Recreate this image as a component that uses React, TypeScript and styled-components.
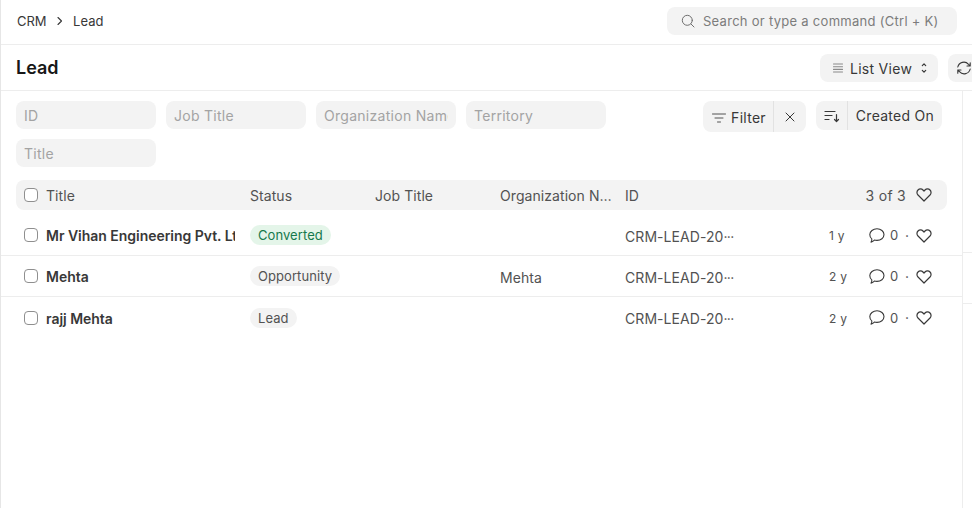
import React from "react";
import styled, { createGlobalStyle } from "styled-components";

const Global = createGlobalStyle`
  html, body { margin: 0; padding: 0; background: #fff; overflow: hidden; }
  body { font-family: Inter, "Noto Sans", sans-serif; font-size: 14px; color: #383838; letter-spacing: 0.02em; }
  * { box-sizing: border-box; }
`;

const Page = styled.div`
  width: 972px; height: 508px; overflow: hidden; border-left: 1px solid #e6e6e6;
  display: flex; flex-direction: column;
`;
const Navbar = styled.header`
  height: 45px; flex: none; border-bottom: 1px solid #ededed;
  display: flex; align-items: flex-start; justify-content: space-between; padding: 7px 15px 0 16px;
`;
const Crumbs = styled.nav`
  display: flex; align-items: center; gap: 10px; height: 27px; font-size: 13px; letter-spacing: 0; color: #383838;
`;
const Search = styled.div`
  width: 290px; height: 28px; border-radius: 8px; background: #f3f3f3; white-space: nowrap;
  display: flex; align-items: center; gap: 8px; padding-left: 14px; color: #7c7c7c; font-size: 13px;
`;
const Header = styled.div`
  height: 46px; flex: none; border-bottom: 1px solid #ededed;
  display: flex; align-items: flex-start; justify-content: space-between; padding: 9px 0 0 15px;
`;
const PageTitle = styled.h1`
  margin: 0; font-size: 18px; font-weight: 600; line-height: 28px; color: #171717; letter-spacing: 0;
`;
const HeaderActions = styled.div`
  display: flex; gap: 10px; margin-right: -8px;
`;
const ListViewBtn = styled.div`
  width: 118px; height: 28px; background: #f3f3f3; border-radius: 8px;
  display: flex; align-items: center; padding-left: 13px; gap: 7px; color: #383838;
`;
const IconBtn = styled.div`
  width: 32px; height: 28px; background: #f3f3f3; border-radius: 8px; display: flex; align-items: center; justify-content: center;
`;
const Body = styled.div`
  flex: 1; display: flex; min-height: 0;
`;
const Content = styled.main`
  width: 962px; flex: none; border-right: 1px solid #ededed;
`;
const Side = styled.aside`
  flex: 1; display: flex; flex-direction: column; padding-top: 111px;
`;
const SideLine = styled.div`
  height: 51px; border-bottom: 1px solid #ededed; flex: none;
`;
const FilterSection = styled.div`
  display: flex; justify-content: space-between; padding: 10px 20px 0 15px; height: 89px;
`;
const Inputs = styled.div`
  width: 600px; display: flex; flex-wrap: wrap; gap: 10px; align-content: flex-start;
`;
const Field = styled.div`
  width: 140px; height: 28px; background: #f3f3f3; border-radius: 8px; padding: 0 8px;
  line-height: 29px; color: #a3a3a3; font-size: 14px;
`;
const FieldText = styled.div`
  overflow: hidden; white-space: nowrap;
`;
const FilterActions = styled.div`
  display: flex; gap: 10px; align-items: flex-start;
`;
const Seg = styled.div<{ $h: number }>`
  display: flex; height: ${p => p.$h}px; background: #f3f3f3; border-radius: 8px; color: #383838;
`;
const SegPart = styled.div<{ $w: number; $divided?: boolean; $top?: number; $pl?: number }>`
  width: ${p => p.$w}px; display: flex; align-items: center; justify-content: center; gap: 5px;
  padding-top: ${p => p.$top ?? 0}px; padding-left: ${p => p.$pl ?? 0}px;
  border-right: ${p => (p.$divided ? "1px solid #e2e2e2" : "none")};
`;
const TableHead = styled.div`
  margin: 0 15px 0 15px; height: 30px; background: #f3f3f3; border-radius: 8px; letter-spacing: 0.005em;
  display: flex; align-items: center; padding-left: 8px; color: #525252;
`;
const Row = styled.div<{ $first?: boolean }>`
  height: ${p => (p.$first ? 46 : 41)}px; padding: ${p => (p.$first ? "5px" : "0")} 15px 0 23px; letter-spacing: 0.005em;
  display: flex; align-items: center; border-bottom: 1px solid #ededed;
  &:last-child { border-bottom: 0; }
`;
const Check = styled.span`
  width: 14px; height: 14px; flex: none; border: 1px solid #8f8f8f; border-radius: 4px; background: #fff; margin-right: 8px;
`;
const TitleCol = styled.div<{ $bold?: boolean }>`
  width: 189px; margin-right: 15px; overflow: hidden; white-space: nowrap; flex: none;
  font-weight: ${p => (p.$bold ? 600 : 400)}; color: ${p => (p.$bold ? "#383838" : "inherit")};
  padding-top: ${p => (p.$bold ? "1px" : "0")};
  letter-spacing: ${p => (p.$bold ? "-0.002em" : "inherit")};
`;
const Col = styled.div<{ $w: number; $gap?: number; $top?: number }>`
  width: ${p => p.$w}px; flex: none; overflow: hidden; white-space: nowrap; text-overflow: ellipsis;
  margin-right: ${p => p.$gap ?? 15}px; color: #525252; padding-top: ${p => p.$top ?? 0}px;
`;
const Dots = styled.span`
  letter-spacing: -0.05em;
`;
const Pill = styled.span<{ $green?: boolean }>`
  display: inline-flex; align-items: center; height: 20px; padding: 0 8px; border-radius: 10px; font-size: 13px;
  background: ${p => (p.$green ? "#e4f5e9" : "#f3f3f3")}; color: ${p => (p.$green ? "#16794c" : "#525252")};
`;
const HeadMeta = styled.div`
  margin-left: auto; margin-right: 15px; display: flex; align-items: center; gap: 10px; color: #525252; letter-spacing: 0.02em;
`;
const RowMeta = styled.div`
  margin-left: auto; display: flex; align-items: center; color: #383838; margin-right: 15px; letter-spacing: 0.02em;
`;
const Age = styled.span<{ $w: number }>`
  font-size: 12px; color: #525252; width: ${p => p.$w}px; padding-top: 1px;
`;
const Count = styled.span`
  margin: 0 0 0 5px; width: 15px; color: #525252; font-size: 13px;
`;
const Dot = styled.span`
  width: 11px; color: #525252;
`;

const stroke = { fill: "none", stroke: "currentColor", strokeLinecap: "round" as const, strokeLinejoin: "round" as const };

const Heart = ({ top = 0 }: { top?: number }) => (
  <svg width="16" height="16" viewBox="0 0 16 16" {...stroke} color="#383838" strokeWidth="1.2" style={top ? { marginTop: top } : undefined}>
    <path d="M8 14 2 8a3.500 3.500 0 0 1 0-5 3.500 3.500 0 0 1 5 0l1 1 1-1a3.500 3.500 0 0 1 5 0 3.500 3.500 0 0 1 0 5L8 14Z" />
  </svg>
);
const Comment = () => (
  <svg width="16" height="16" viewBox="0 0 16 16" {...stroke} color="#383838" strokeWidth="1.1" style={{ marginTop: 1 }}>
    <path d="M8 .8c3.900 0 7 2.500 7 5.800s-3.100 5.800-7 5.800c-.9 0-1.800-.1-2.600-.4-.8 1-2 1.800-3.400 2.100.7-.9 1-2 .8-3.200C1.400 10 .8 8.400 .8 6.600 .8 3.300 4.100 .8 8 .8Z" />
  </svg>
);

function LeadRow({ first, title, status, green, org, age }: { first?: boolean; title: string; status: string; green?: boolean; org?: string; age: string }) {
  return (
    <Row $first={first}>
      <Check />
      <TitleCol $bold>{title}</TitleCol>
      <Col $w={110}><Pill $green={green}>{status}</Pill></Col>
      <Col $w={110} />
      <Col $w={110} $top={2}>{org}</Col>
      <Col $w={112} $top={2}>CRM-LEAD-20<Dots>···</Dots></Col>
      <RowMeta>
        <Age $w={40}>{age}</Age>
        <Comment />
        <Count>0</Count>
        <Dot>·</Dot>
        <Heart top={1} />
      </RowMeta>
    </Row>
  );
}

export default function App() {
  return (
    <>
      <Global />
      <Page>
        <Navbar>
          <Crumbs>
            <span>CRM</span>
            <svg width="6.500" height="10" viewBox="0 0 6.500 10" {...stroke} color="#383838" strokeWidth="1.1"><path d="M1 1.500 4.500 5 1 8.500" /></svg>
            <span>Lead</span>
          </Crumbs>
          <Search>
            <svg width="14" height="14" viewBox="0 0 14 14" {...stroke} color="#6f6f6f" strokeWidth="1"><circle cx="6.300" cy="6.300" r="5" /><path d="m10 10 3 3" /></svg>
            <span>Search or type a command (Ctrl + K)</span>
          </Search>
        </Navbar>
        <Header>
          <PageTitle>Lead</PageTitle>
          <HeaderActions>
            <ListViewBtn>
              <svg width="10" height="10" viewBox="0 0 10 10" {...stroke} color="#8a8a8a" strokeWidth="1.100"><path d="M.5 1h9M.5 3.700h9M.5 6.400h9M.5 9h9" /></svg>
              <span>List View</span>
              <svg width="8" height="12" viewBox="0 0 8 12" {...stroke} color="#383838" strokeWidth="1.200" style={{ marginLeft: 1 }}><path d="M2.300 3.600 4 1.800l1.700 1.800M2.300 8.400 4 10.200l1.700-1.800" /></svg>
            </ListViewBtn>
            <IconBtn>
              <svg width="16" height="16" viewBox="0 0 16 16" {...stroke} color="#383838" strokeWidth="1.1"><path d="M1.800 7A6.200 6.200 0 0 1 12.500 4.300L14.200 6M14.200 9A6.200 6.200 0 0 1 3.500 11.700L1.800 10M14.200 2.800V6H11M1.800 13.200V10H5" /></svg>
            </IconBtn>
          </HeaderActions>
        </Header>
        <Body>
          <Content>
            <FilterSection>
              <Inputs>
                <Field><FieldText>ID</FieldText></Field>
                <Field><FieldText>Job Title</FieldText></Field>
                <Field><FieldText>Organization Name</FieldText></Field>
                <Field><FieldText>Territory</FieldText></Field>
                <Field><FieldText>Title</FieldText></Field>
              </Inputs>
              <FilterActions>
                <Seg $h={31}>
                  <SegPart $w={71} $divided $top={2} $pl={2}>
                    <svg width="14" height="10" viewBox="0 0 14 10" {...stroke} color="#525252" strokeWidth="1"><path d="M.5 1h13M3 5h8M5.500 9h3" /></svg>
                    <span>Filter</span>
                  </SegPart>
                  <SegPart $w={32}>
                    <svg width="10" height="10" viewBox="0 0 10 10" {...stroke} color="#383838" strokeWidth="1"><path d="m1 1 8 8M9 1 1 9" /></svg>
                  </SegPart>
                </Seg>
                <Seg $h={29}>
                  <SegPart $w={32} $divided>
                    <svg width="16" height="14" viewBox="0 0 16 14" {...stroke} color="#383838" strokeWidth="1.200"><path d="M1 2.500h10M1 6.500h7M1 10.500h4M12.500 5.500v7M10.500 10.500l2 2 2-2" /></svg>
                  </SegPart>
                  <SegPart $w={94}>Created On</SegPart>
                </Seg>
              </FilterActions>
            </FilterSection>
            <TableHead>
              <Check />
              <TitleCol>Title</TitleCol>
              <Col $w={110}>Status</Col>
              <Col $w={110}>Job Title</Col>
              <Col $w={112} $gap={13}>Organization Name</Col>
              <Col $w={110}>ID</Col>
              <HeadMeta>
                <span>3 of 3</span>
                <Heart />
              </HeadMeta>
            </TableHead>
            <LeadRow first title="Mr Vihan Engineering Pvt. Ltd" status="Converted" green age="1 y" />
            <LeadRow title="Mehta" status="Opportunity" org="Mehta" age="2 y" />
            <LeadRow title="rajj Mehta" status="Lead" age="2 y" />
          </Content>
          <Side>
            <SideLine />
            <SideLine />
          </Side>
        </Body>
      </Page>
    </>
  );
}
